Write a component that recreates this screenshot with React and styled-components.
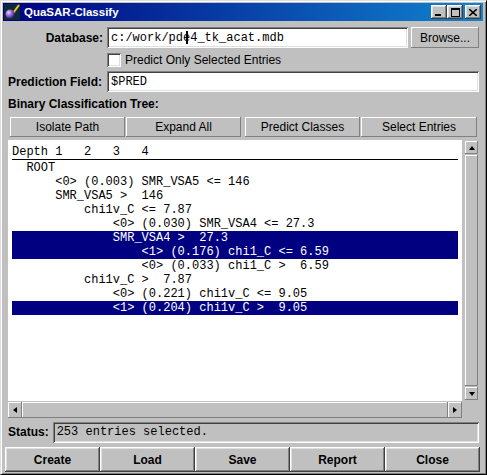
import React from 'react';
import styled, { createGlobalStyle, css } from 'styled-components';

const GlobalStyle = createGlobalStyle`
  html, body {
    margin: 0;
    padding: 0;
    background: #c0c0c0;
  }
  body {
    font-family: "Liberation Sans", Arial, sans-serif;
    font-size: 12px;
    color: #000;
  }
`;

const raised = css`
  box-shadow: inset -1px -1px 0 #404040, inset 1px 1px 0 #fff,
    inset -2px -2px 0 #808080, inset 2px 2px 0 #dfdfdf;
`;

const thinRaised = css`
  box-shadow: inset -1px -1px 0 #808080, inset 1px 1px 0 #fff;
`;

const sunken = css`
  box-shadow: inset 1px 1px 0 #808080, inset -1px -1px 0 #fff,
    inset 2px 2px 0 #404040, inset -2px -2px 0 #dfdfdf;
`;

const mono = css`
  font-family: "Liberation Mono", "Courier New", monospace;
  font-size: 12px;
`;

const Window = styled.div`
  width: 487px;
  height: 475px;
  box-sizing: border-box;
  display: flex;
  flex-direction: column;
  background: #c0c0c0;
  border: 1px solid;
  border-color: #dfdfdf #000 #000 #dfdfdf;
  box-shadow: inset 1px 1px 0 #fff, inset -1px -1px 0 #808080;
  padding: 2px 3px 2px 2px;
`;

const TitleBar = styled.div`
  height: 18px;
  display: flex;
  align-items: center;
  padding: 0 2px 0 1px;
  background: linear-gradient(to right, #000080, #1084d0);
  color: #fff;
  font-weight: bold;
  font-size: 11.5px;
`;

const TitleText = styled.span`
  margin-left: 4px;
  flex: 1;
`;

const CaptionButton = styled.div`
  width: 16px;
  height: 14px;
  background: #c0c0c0;
  ${raised};
  display: flex;
  align-items: center;
  justify-content: center;
  margin-left: ${p => (p.$gap ? '2px' : '0')};
`;

const Content = styled.div`
  flex: 1;
  display: flex;
  flex-direction: column;
  margin-top: 1px;
  padding: 5px 4px 0 5px;
`;

const FieldRow = styled.div`
  display: flex;
  align-items: center;
  gap: ${p => p.$gap || 4}px;
  height: 21px;
  margin-top: ${p => p.$top || 0}px;
`;

const Label = styled.label`
  width: ${p => p.$width}px;
  text-align: right;
  font-weight: bold;
  white-space: nowrap;
`;

const TextField = styled.div`
  flex: 1;
  height: 21px;
  box-sizing: border-box;
  background: ${p => (p.$readOnly ? '#c0c0c0' : '#fff')};
  ${sunken};
  ${mono};
  display: flex;
  align-items: center;
  padding-left: 4px;
  white-space: pre;
`;

const Caret = styled.span`
  display: inline-block;
  width: 0;
  height: 13px;
  border-left: 2px solid #000;
  margin: 0 -5px 0 3px;
`;

const PushButton = styled.button`
  font-family: "Liberation Sans", Arial, sans-serif;
  font-size: 12px;
  color: #000;
  background: #c0c0c0;
  border: none;
  padding: 0;
  margin: 0;
  ${thinRaised};
  width: ${p => p.$width}px;
  height: ${p => p.$height || 20}px;
`;

const CheckRow = styled.div`
  display: flex;
  align-items: center;
  gap: 4px;
  height: 14px;
  margin: 5px 0 0 99px;
`;

const CheckBox = styled.span`
  width: 14px;
  height: 14px;
  box-sizing: border-box;
  background: #fff;
  ${sunken};
`;

const SectionLabel = styled.div`
  height: 16px;
  margin-top: 4px;
  display: flex;
  align-items: center;
  font-weight: bold;
`;

const ToolRow = styled.div`
  display: flex;
  gap: 4px;
  margin: 5px 0 0 2px;
`;

const ToolGroup = styled.div`
  display: flex;
  gap: 1px;
`;

const ScrollPane = styled.div`
  flex: 1;
  margin-top: 3px;
  display: grid;
  grid-template-columns: 1fr 16px;
  grid-template-rows: 1fr 16px;
  gap: 1px;
`;

const Viewport = styled.div`
  background: #fff;
  padding: 5px 4px 0 4px;
  ${mono};
  overflow: hidden;
`;

const HeaderLine = styled.div`
  height: 14px;
  line-height: 14px;
  white-space: pre;
  border-bottom: 1px solid #000;
  margin-bottom: 1px;
`;

const TreeRow = styled.div`
  height: 14px;
  line-height: 14px;
  white-space: pre;
  padding-left: ${p => p.$indent}ch;
  background: ${p => (p.$selected ? '#000080' : 'transparent')};
  color: ${p => (p.$selected ? '#fff' : '#000')};
`;

const ScrollBar = styled.div`
  display: flex;
  flex-direction: ${p => (p.$vertical ? 'column' : 'row')};
  background: #c0c0c0;
`;

const ArrowButton = styled.div`
  flex: 0 0 ${p => (p.$vertical ? '13px' : '14px')};
  ${thinRaised};
  display: flex;
  align-items: center;
  justify-content: center;
  margin: ${p => (p.$vertical ? '1px 1px 1px 2px' : '0')};
`;

const Thumb = styled.div`
  flex: 1;
  ${thinRaised};
  margin: ${p => (p.$vertical ? '0 1px 0 2px' : '0')};
`;

const Arrow = styled.span`
  width: 0;
  height: 0;
  border: 3px solid transparent;
  ${p => p.$dir === 'up' && css`border-bottom: 4px solid #000; border-top-width: 0;`}
  ${p => p.$dir === 'down' && css`border-top: 4px solid #000; border-bottom-width: 0;`}
  ${p => p.$dir === 'left' && css`border-right: 4px solid #000; border-left-width: 0;`}
  ${p => p.$dir === 'right' && css`border-left: 4px solid #000; border-right-width: 0;`}
`;

const Corner = styled.div`
  background: #c0c0c0;
`;

const ButtonBar = styled.div`
  display: flex;
  height: 25px;
  margin: 5px -1px 0 -3px;
`;

const BigButton = styled.button`
  flex: 1;
  font-family: "Liberation Sans", Arial, sans-serif;
  font-size: 12px;
  font-weight: bold;
  color: #000;
  background: #c0c0c0;
  border: none;
  padding: 0;
  ${raised};
`;

const rows = [
  { indent: 2, text: 'ROOT' },
  { indent: 6, text: '<0> (0.003) SMR_VSA5 <= 146' },
  { indent: 6, text: 'SMR_VSA5 >  146' },
  { indent: 10, text: 'chi1v_C <= 7.87' },
  { indent: 14, text: '<0> (0.030) SMR_VSA4 <= 27.3' },
  { indent: 14, text: 'SMR_VSA4 >  27.3', selected: true },
  { indent: 18, text: '<1> (0.176) chi1_C <= 6.59', selected: true },
  { indent: 18, text: '<0> (0.033) chi1_C >  6.59' },
  { indent: 10, text: 'chi1v_C >  7.87' },
  { indent: 14, text: '<0> (0.221) chi1v_C <= 9.05' },
  { indent: 14, text: '<1> (0.204) chi1v_C >  9.05', selected: true },
];

function AppIcon() {
  return (
    <svg width="16" height="16" viewBox="0 0 16 16">
      <defs>
        <radialGradient id="ball" cx="0.35" cy="0.35" r="0.7">
          <stop offset="0" stopColor="#e8d8ff" />
          <stop offset="0.45" stopColor="#9a6ee0" />
          <stop offset="1" stopColor="#3a1a7a" />
        </radialGradient>
      </defs>
      <rect width="16" height="16" fill="#0c2a3c" />
      <line x1="7" y1="12" x2="15" y2="1" stroke="#f0c030" strokeWidth="2" />
      <circle cx="6" cy="10" r="4.5" fill="url(#ball)" />
    </svg>
  );
}

export default function App() {
  return (
    <>
      <GlobalStyle />
      <Window>
        <TitleBar>
          <AppIcon />
          <TitleText>QuaSAR-Classify</TitleText>
          <CaptionButton>
            <svg width="8" height="8" viewBox="0 0 8 8">
              <rect x="0" y="6" width="6" height="2" fill="#000" />
            </svg>
          </CaptionButton>
          <CaptionButton>
            <svg width="9" height="9" viewBox="0 0 9 9">
              <rect x="0.5" y="0.5" width="8" height="8" fill="none" stroke="#000" />
              <rect x="0" y="0" width="9" height="2" fill="#000" />
            </svg>
          </CaptionButton>
          <CaptionButton $gap>
            <svg width="8" height="7" viewBox="0 0 8 7">
              <path d="M0 0 L8 7 M8 0 L0 7" stroke="#000" strokeWidth="1.6" />
            </svg>
          </CaptionButton>
        </TitleBar>

        <Content>
          <FieldRow>
            <Label $width={95}>Database:</Label>
            <TextField>
              c:/work/pd<Caret />e4_tk_acat.mdb
            </TextField>
            <PushButton $width={68} $height={21} style={{ marginLeft: -1 }}>Browse...</PushButton>
          </FieldRow>

          <CheckRow>
            <CheckBox />
            <span>Predict Only Selected Entries</span>
          </CheckRow>

          <FieldRow $top={4} $gap={7}>
            <Label $width={92}>Prediction Field:</Label>
            <TextField>$PRED</TextField>
          </FieldRow>

          <SectionLabel>Binary Classification Tree:</SectionLabel>

          <ToolRow>
            <ToolGroup>
              <PushButton $width={115}>Isolate Path</PushButton>
              <PushButton $width={115}>Expand All</PushButton>
            </ToolGroup>
            <ToolGroup>
              <PushButton $width={115}>Predict Classes</PushButton>
              <PushButton $width={116}>Select Entries</PushButton>
            </ToolGroup>
          </ToolRow>

          <ScrollPane>
            <Viewport>
              <HeaderLine>Depth 1   2   3   4</HeaderLine>
              {rows.map((r, i) => (
                <TreeRow key={i} $indent={r.indent} $selected={r.selected}>
                  {r.text}
                </TreeRow>
              ))}
            </Viewport>
            <ScrollBar $vertical>
              <ArrowButton $vertical><Arrow $dir="up" /></ArrowButton>
              <Thumb $vertical />
              <ArrowButton $vertical><Arrow $dir="down" /></ArrowButton>
            </ScrollBar>
            <ScrollBar>
              <ArrowButton><Arrow $dir="left" /></ArrowButton>
              <Thumb />
              <ArrowButton><Arrow $dir="right" /></ArrowButton>
            </ScrollBar>
            <Corner />
          </ScrollPane>

          <FieldRow $top={4} style={{ height: 20 }}>
            <Label>Status:</Label>
            <TextField $readOnly>253 entries selected.</TextField>
          </FieldRow>

          <ButtonBar>
            <BigButton>Create</BigButton>
            <BigButton>Load</BigButton>
            <BigButton>Save</BigButton>
            <BigButton>Report</BigButton>
            <BigButton>Close</BigButton>
          </ButtonBar>
        </Content>
      </Window>
    </>
  );
}
